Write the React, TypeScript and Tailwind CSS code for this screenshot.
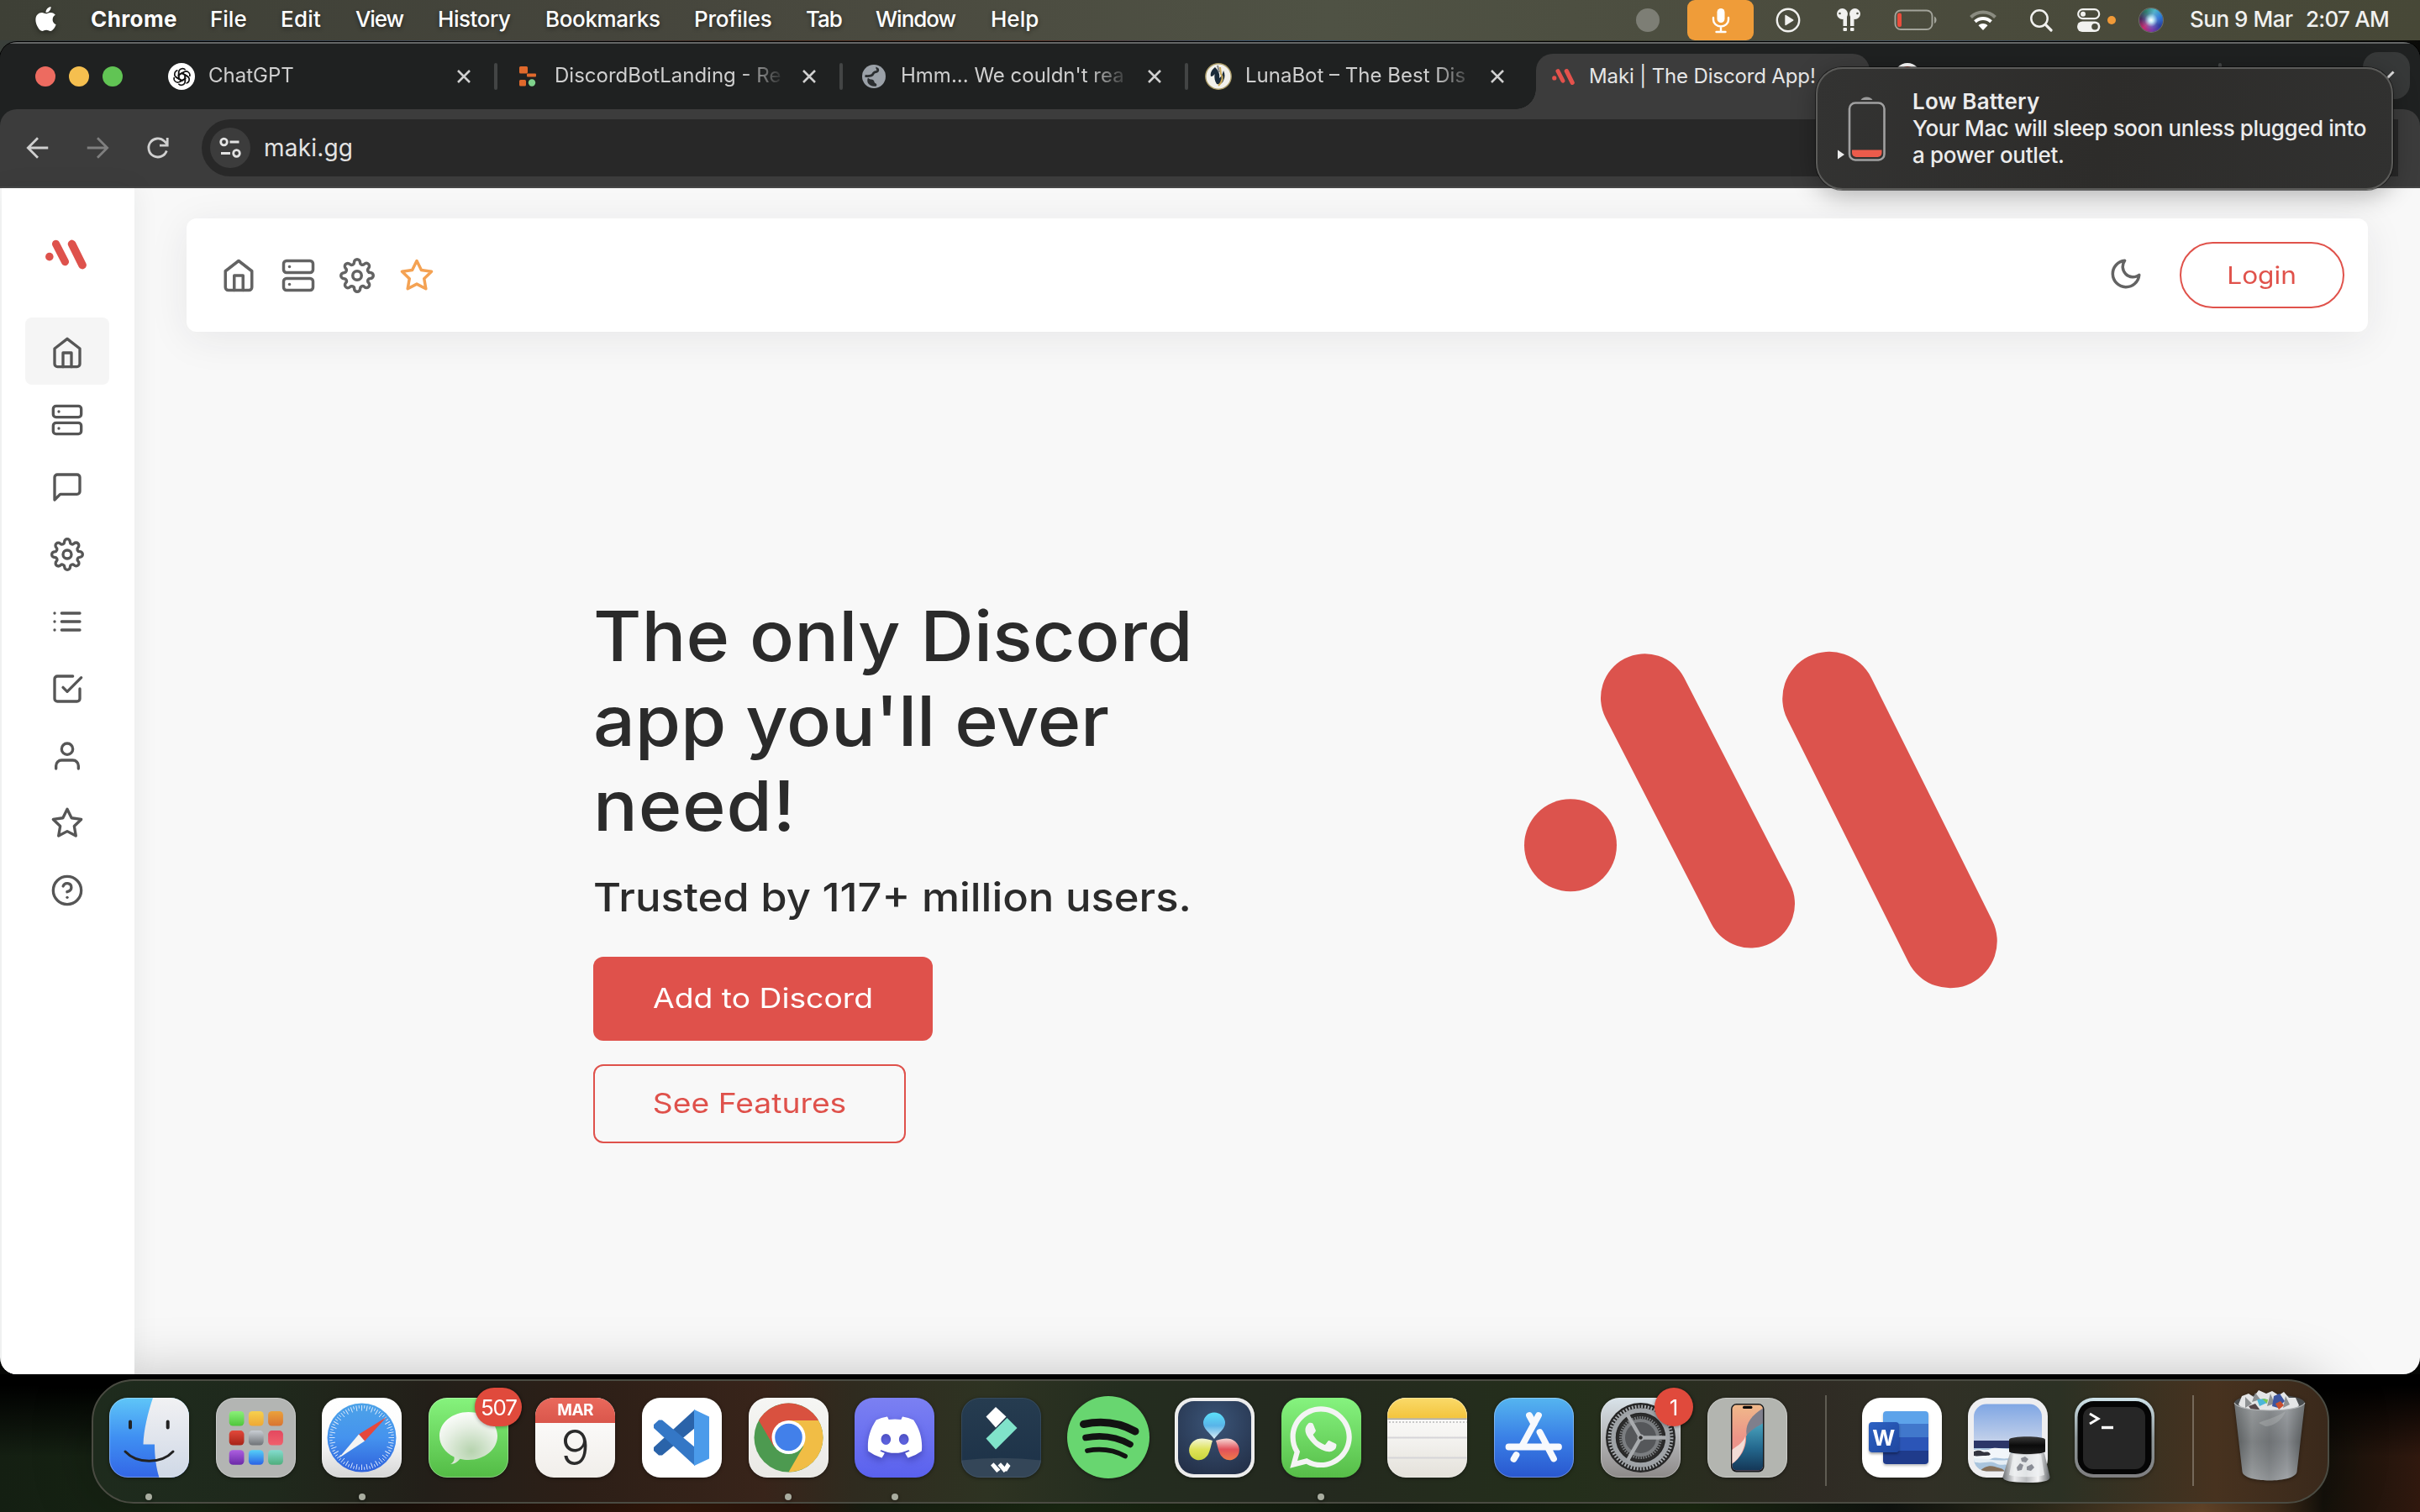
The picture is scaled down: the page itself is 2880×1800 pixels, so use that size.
import type { ReactNode } from "react";
import {
  FiCheckSquare,
  FiHelpCircle,
  FiHome,
  FiList,
  FiMessageSquare,
  FiMoon,
  FiServer,
  FiSettings,
  FiStar,
  FiUser,
} from "react-icons/fi";
import { FaApple, FaDiscord, FaWhatsapp } from "react-icons/fa";

/* ---------- shared pieces ---------- */

function MakiLogo({ className }: { className: string }) {
  return (
    <svg viewBox="1813 775 565 402" className={className} fill="none" stroke="currentColor" strokeLinecap="round">
      <circle cx="1869" cy="1006.3" r="55" fill="currentColor" stroke="none" />
      <path d="M1957.5 830.8L2083.5 1076" strokeWidth="105" />
      <path d="M2177 831.5L2321 1120.5" strokeWidth="111.5" />
    </svg>
  );
}

/* ---------- menu bar ---------- */

const menuItems = [
  { label: "Chrome", cls: "w-[142px] font-bold tracking-[0.4px]" },
  { label: "File", cls: "w-[84px] font-medium" },
  { label: "Edit", cls: "w-[89px] font-medium tracking-[0.2px]" },
  { label: "View", cls: "w-[98px] font-medium tracking-[-1.1px]" },
  { label: "History", cls: "w-[128px] font-medium tracking-[-0.45px]" },
  { label: "Bookmarks", cls: "w-[177px] font-medium tracking-[-0.36px]" },
  { label: "Profiles", cls: "w-[133px] font-medium tracking-[-0.2px]" },
  { label: "Tab", cls: "w-[83px] font-medium tracking-[-1px]" },
  { label: "Window", cls: "w-[137px] font-medium tracking-[-1px]" },
  { label: "Help", cls: "w-[80px] font-medium" },
];

function BatteryIcon() {
  return (
    <svg viewBox="0 0 52 26" className="h-[26px] w-[52px]">
      <rect x="1.5" y="1.5" width="44" height="22.5" rx="6.5" fill="none" stroke="#a2a39a" strokeWidth="2" />
      <rect x="4" y="4.5" width="5" height="16.5" rx="2" fill="#eb4d3d" />
      <path d="M48 8.5c3.4 1.600 3.400 7 0 8.500z" fill="#a2a39a" />
    </svg>
  );
}

function AirPodsIcon() {
  return (
    <svg viewBox="0 0 30 30" className="h-[30px] w-[30px]" fill="#f1f1ef">
      <ellipse cx="7.500" cy="7.500" rx="6.500" ry="6.500" />
      <ellipse cx="22.500" cy="7.500" rx="6.500" ry="6.500" />
      <rect x="8.500" y="7" width="4.500" height="15" />
      <rect x="17" y="7" width="4.500" height="15" />
      <rect x="8.500" y="24" width="4.500" height="4" rx="1" />
      <rect x="17" y="24" width="4.500" height="4" rx="1" />
      <circle cx="4.500" cy="7" r="1.300" fill="#55564a" />
      <circle cx="25.500" cy="7" r="1.300" fill="#55564a" />
    </svg>
  );
}

function WifiIcon() {
  return (
    <svg viewBox="0 0 34 26" className="h-[26px] w-[34px]" fill="none" strokeWidth="4">
      <path d="M2.500 9.500C10.500 1.500 23.500 1.500 31.500 9.500" stroke="#8a8b80" />
      <path d="M7.500 14.800C13 9.800 21 9.800 26.500 14.800" stroke="#fff" />
      <path d="M11.500 19.200C14.500 16.200 19.500 16.200 22.500 19.200L17 25z" fill="#fff" stroke="none" />
    </svg>
  );
}

function ControlCenterIcon() {
  return (
    <svg viewBox="0 0 28 28" className="h-[28px] w-[28px]">
      <rect x="1.200" y="1.200" width="25" height="11" rx="5.500" fill="none" stroke="#f1f1ef" strokeWidth="2.200" />
      <circle cx="7" cy="6.700" r="3" fill="#f1f1ef" />
      <rect x="0" y="15.500" width="27.400" height="12.500" rx="6.200" fill="#f1f1ef" />
      <circle cx="21" cy="21.700" r="3.800" fill="#4c4d3f" />
    </svg>
  );
}

function MenuBar() {
  return (
    <header className="relative flex h-[48px] w-full shrink-0 items-center bg-[linear-gradient(90deg,#3e4036_0%,#45453c_25%,#4b4b40_38%,#4f5244_55%,#4b4c3e_75%,#474837_100%)] text-[26px] text-white">
      <div className="flex w-[108px] justify-center pb-[3px]">
        <FaApple className="h-[33px] w-[33px] drop-shadow-[0_2px_3px_rgba(0,0,0,0.4)]" />
      </div>
      <nav className="flex pb-[3px] [text-shadow:0_2px_5px_rgba(0,0,0,0.45)]">
        {menuItems.map((m) => (
          <span key={m.label} className={`whitespace-nowrap ${m.cls}`}>
            {m.label}
          </span>
        ))}
      </nav>
      <div className="ml-auto flex h-full items-center">
        <span className="h-[28px] w-[28px] rounded-full bg-[#7d7e75]" />
        <span className="ml-[33px] flex h-full w-[79px] items-center justify-center rounded-[9px] bg-[#ef9c39]">
          <svg viewBox="0 0 24 32" className="h-[32px] w-[24px]" fill="none" stroke="#fff" strokeWidth="2.400" strokeLinecap="round">
            <rect x="7.500" y="2" width="9" height="17" rx="4.500" fill="#fff" stroke="none" />
            <path d="M3 13v2.500a9 8 0 0 0 18 0V13M12 23.500V29M6.500 30h11" />
          </svg>
        </span>
        <svg viewBox="0 0 30 30" className="ml-[26px] h-[30px] w-[30px]">
          <circle cx="15" cy="15" r="13.200" fill="none" stroke="#f1f1ef" strokeWidth="2.400" />
          <path d="M11.300 9.600v10.800c0 .8.700 1 1.300.6l8.400-5.200c.6-.4.600-1.200 0-1.600L12.600 9c-.6-.4-1.300-.2-1.300.6z" fill="#f1f1ef" />
        </svg>
        <span className="ml-[42px]">
          <AirPodsIcon />
        </span>
        <span className="ml-[39px]">
          <BatteryIcon />
        </span>
        <span className="ml-[37px]">
          <WifiIcon />
        </span>
        <svg viewBox="0 0 28 28" className="ml-[38px] h-[28px] w-[28px]" fill="none" stroke="#f1f1ef" strokeLinecap="round">
          <circle cx="12" cy="12" r="9.700" strokeWidth="2.500" />
          <path d="M19.200 19.200L26 26" strokeWidth="3.200" />
        </svg>
        <span className="ml-[29px]">
          <ControlCenterIcon />
        </span>
        <span className="ml-[8px] h-[10px] w-[10px] rounded-full bg-[#f19a38]" />
        <span className="ml-[28px] h-[28px] w-[28px] rounded-full bg-[radial-gradient(circle_at_50%_50%,#ffffff_0%,#bfe6f5_14%,rgba(120,150,220,0.3)_40%,transparent_60%),conic-gradient(from_20deg,#4fb6c9,#2a78d8,#2b3fa0,#7a3aa8,#c52d6f,#4a2a5c,#2f7c6a,#4fb6c9)] ring-1 ring-[#6e706b]" />
        <div className="ml-[32px] flex pb-[3px] font-medium text-[#f1f1ef]">
          <span className="w-[138px] whitespace-nowrap tracking-[-0.48px]">Sun 9 Mar</span>
          <span className="w-[136px] whitespace-nowrap tracking-[-0.73px]">2:07 AM</span>
        </div>
      </div>
    </header>
  );
}

/* ---------- browser chrome ---------- */

function CloseX() {
  return (
    <svg viewBox="0 0 16 16" className="h-[16px] w-[16px] shrink-0" stroke="#d0d0d0" strokeWidth="2.600">
      <path d="M1 1l14 14M15 1L1 15" />
    </svg>
  );
}

function ChatGptIcon() {
  return (
    <span className="flex h-[32px] w-[32px] items-center justify-center rounded-full bg-white">
      <svg viewBox="0 0 24 24" className="h-[25px] w-[25px]" fill="none" stroke="#111" strokeWidth="1.500" strokeLinejoin="round">
        {[0, 60, 120, 180, 240, 300].map((a) => (
          <path key={a} d="M8.300 15.200V7a4.400 4.400 0 0 1 7.700-2.900M8.300 9.900l3.700-2.150 6.600 3.800" transform={`rotate(${a} 12 12)`} />
        ))}
      </svg>
    </span>
  );
}

function ReplitIcon() {
  return (
    <svg viewBox="0 0 32 32" className="h-[32px] w-[32px]">
      <rect x="6" y="4" width="10" height="8.500" rx="1.500" fill="#e0692c" />
      <rect x="15" y="12.500" width="11" height="4" rx="1" fill="#e0692c" />
      <rect x="6" y="20" width="8" height="7.500" rx="1.500" fill="#e0692c" />
      <circle cx="21" cy="23.500" r="4.200" fill="#7fd38c" />
    </svg>
  );
}

function GlobeIcon() {
  return (
    <svg viewBox="0 0 32 32" className="h-[32px] w-[32px]">
      <circle cx="16" cy="16" r="14" fill="#9ba1a8" />
      <path d="M5.500 15.500c2 .2 5 .3 7.500-.6 2.600-.9 1.500-2.700 3.500-3.700 1.800-.9 4.200-.4 4.300-2.700.1-1.600-1.800-2-1-3.300" fill="none" stroke="#2b2e30" strokeWidth="2.800" />
      <path d="M9 17.500c1.500 2.500 5 1.500 6.500 3s.5 3 2.500 3.700c1.500.5 1.500 1.800 1 3.300-4 1-8-.5-10-3.500-1-2-1-4.500 0-6.500z" fill="#2b2e30" />
    </svg>
  );
}

function LunaIcon() {
  return (
    <svg viewBox="0 0 32 32" className="h-[32px] w-[32px]">
      <circle cx="16" cy="16" r="15.200" fill="#f2f1ec" stroke="#a99a66" strokeWidth="1.400" />
      <path d="M12 5c-4 3-6 7-5 11 2 0 3.500-1 4.500-3-.5 5 0 8 2.500 12 4 1 7-1 8-4 2-4 2-8 0-12-1 4-2 7-5 9 1-5-1-9-5-13z" fill="#1b2b3a" />
      <path d="M18 5l1 8c3 4 2 9-3 14" fill="none" stroke="#c9a95a" strokeWidth="2" />
      <path d="M15 3l2 8" stroke="#888" strokeWidth="2" />
    </svg>
  );
}

const tabs: { title: string; icon: ReactNode; cls: string }[] = [
  { title: "ChatGPT", icon: <ChatGptIcon />, cls: "w-[412px] pl-[20px]" },
  { title: "DiscordBotLanding - Re", icon: <ReplitIcon />, cls: "w-[411px] pl-[20px]" },
  { title: "Hmm... We couldn't rea", icon: <GlobeIcon />, cls: "w-[411px] pl-[21px]" },
  { title: "LunaBot – The Best Dis", icon: <LunaIcon />, cls: "w-[408px] pl-[20px]" },
];

function TabStrip() {
  return (
    <div className="flex h-[78px] shrink-0 bg-[#1f2121] text-[24px] text-[#cfcfcf]">
      <div className="flex w-[180px] items-center gap-[16px] pl-[42px]">
        <span className="h-[24px] w-[24px] rounded-full bg-[#ed6b60]" />
        <span className="h-[24px] w-[24px] rounded-full bg-[#f5bf4f]" />
        <span className="h-[24px] w-[24px] rounded-full bg-[#61c454]" />
      </div>
      {tabs.map((t, i) => (
        <div key={t.title} className={`flex items-center ${t.cls}`}>
          {t.icon}
          <span className="mb-[2px] ml-[16px] w-[274px] whitespace-nowrap [mask-image:linear-gradient(90deg,#000_82%,transparent_100%)]">
            {t.title}
          </span>
          <span className="ml-auto flex items-center">
            <CloseX />
            <span className={`ml-[28px] h-[32px] w-[4px] rounded-full ${i < 3 ? "bg-[#434545]" : ""}`} />
          </span>
        </div>
      ))}
      <div className="flex items-end">
        <span className="h-[24px] w-[6px]" />
        <div className="relative mt-[12px] flex h-[66px] w-[397px] items-center self-end rounded-t-[20px] bg-[#3c3c3c] pb-[12px] pl-[19px] text-[#e6e6e6]">
          <span className="absolute bottom-0 left-[-24px] h-[24px] w-[24px] bg-[radial-gradient(circle_at_0_0,transparent_23.500px,#3c3c3c_24px)]" />
          <span className="absolute right-[-24px] bottom-0 h-[24px] w-[24px] bg-[radial-gradient(circle_at_100%_0,transparent_23.500px,#3c3c3c_24px)]" />
          <MakiLogo className="h-[19px] w-[27px] text-[#e4524c]" />
          <span className="ml-[17px] whitespace-nowrap tracking-[-0.14px]">Maki | The Discord App!</span>
        </div>
      </div>
      <div className="ml-[29px] flex items-center">
        <span className="flex h-[32px] w-[32px] items-center justify-center rounded-full bg-white">
          <span className="h-[24px] w-[20px] rounded-full bg-[#c8452f]" />
        </span>
        <span className="ml-[354px] h-[32px] w-[4px] rounded-full bg-[#434545]" />
      </div>
      <div className="mt-[10px] mr-[12px] ml-auto flex h-[56px] w-[56px] items-center justify-center rounded-[18px] bg-[#373939]">
        <svg viewBox="0 0 20 12" className="h-[12px] w-[20px]" fill="none" stroke="#e0e0e0" strokeWidth="3">
          <path d="M1.500 1.500L10 10l8.500-8.500" />
        </svg>
      </div>
    </div>
  );
}

function Toolbar() {
  return (
    <div className="flex h-[94px] shrink-0 items-center rounded-tl-[20px] rounded-tr-[20px] border-b-2 border-[#464646] bg-[#3c3c3c]">
      <svg viewBox="0 0 24 24" className="ml-[31px] h-[28px] w-[28px]" fill="none" stroke="#d0d0d0" strokeWidth="2.400">
        <path d="M22.500 12H2.500M12 2L2 12l10 10" />
      </svg>
      <svg viewBox="0 0 24 24" className="ml-[43px] h-[28px] w-[28px]" fill="none" stroke="#7f7f7f" strokeWidth="2.400">
        <path d="M1.500 12h20M12 2l10 10-10 10" />
      </svg>
      <svg viewBox="0 0 28 28" className="ml-[44px] h-[28px] w-[28px]" fill="none" stroke="#d0d0d0" strokeWidth="2.800">
        <path d="M24.300 17.500A11 11 0 1 1 21.500 6l3.500 3.500M25.200 2v9.200H16" />
      </svg>
      <div className="ml-[38px] flex h-[68px] flex-1 items-center rounded-l-[34px] bg-[#282828]">
        <span className="ml-[10px] flex h-[48px] w-[48px] items-center justify-center rounded-full bg-[#3c3c3c]">
          <svg viewBox="0 0 26 26" className="h-[26px] w-[26px]" fill="none" stroke="#e3e3e3" strokeWidth="2.800">
            <circle cx="5.500" cy="6" r="3.800" />
            <path d="M12.500 6h11M2 19.500h11" />
            <circle cx="20.500" cy="19.500" r="3.800" />
          </svg>
        </span>
        <span className="ml-[16px] pb-[1px] text-[28px] tracking-[0.2px] text-[#e3e3e3]">maki.gg</span>
      </div>
      <span className="w-[26px]" />
    </div>
  );
}

/* ---------- page ---------- */

const sideIcons = [FiHome, FiServer, FiMessageSquare, FiSettings, FiList, FiCheckSquare, FiUser, FiStar, FiHelpCircle];

function Sidebar() {
  return (
    <aside className="z-10 flex w-[158px] shrink-0 flex-col items-center bg-white pr-[2px] shadow-[0_0_30px_rgba(34,41,47,0.07)]">
      <MakiLogo className="mt-[61px] mr-[4px] h-[36px] w-[49px] text-[#de524c]" />
      <nav className="mt-[57px] flex flex-col">
        {sideIcons.map((Icon, i) => (
          <a
            key={i}
            className={`flex h-[80px] w-[100px] items-center justify-center rounded-[8px] pt-[4px] ${i === 0 ? "bg-[#f5f5f5]" : ""}`}
          >
            <Icon className="h-[40px] w-[40px] text-[#565656]" />
          </a>
        ))}
      </nav>
    </aside>
  );
}

function TopNav() {
  return (
    <div className="mt-[36px] mr-[62px] ml-[62px] flex h-[135px] shrink-0 items-center rounded-[12px] bg-white text-[#636363] shadow-[0_8px_48px_rgba(34,41,47,0.08)]">
      <div className="ml-[41px] flex gap-[28.500px]">
        <FiHome className="h-[42px] w-[42px]" />
        <FiServer className="h-[42px] w-[42px]" />
        <FiSettings className="h-[42px] w-[42px]" />
        <FiStar className="h-[42px] w-[42px] text-[#f4a253]" />
      </div>
      <FiMoon className="mb-[3px] ml-auto h-[42px] w-[42px]" />
      <button className="mr-[28px] ml-[43px] flex h-[79px] w-[196px] items-center justify-center rounded-full border-2 border-[#e0524b] text-[28px] text-[#e0524b]">
        <span className="scale-x-[1.130]">Login</span>
      </button>
    </div>
  );
}

function Hero() {
  return (
    <section className="flex pt-[312px] pl-[546px] text-[#2b2b2b]">
      <div className="flex w-[1107px] shrink-0 flex-col items-start">
        <h1 className="w-[690px] origin-left scale-x-[1.060] text-[83px] leading-[101px] font-medium">
          <span className="tracking-[0.100px]">The only Discord</span>
          <br />
          <span className="tracking-[-0.200px]">app you'll ever</span>
          <br />
          <span className="tracking-[0.700px]">need!</span>
        </h1>
        <p className="mt-[30px] origin-left scale-x-[1.080] text-[47px] leading-[56px] font-medium whitespace-nowrap">
          Trusted by 117+ million users.
        </p>
        <button className="mt-[43px] flex h-[100px] w-[404px] items-center justify-center rounded-[12px] bg-[#df514b] text-[33px] text-white">
          <span className="scale-x-[1.130]">Add to Discord</span>
        </button>
        <button className="mt-[28px] flex h-[94px] w-[372px] items-center justify-center rounded-[12px] border-2 border-[#df514b] text-[33px] text-[#df514b]">
          <span className="scale-x-[1.130]">See Features</span>
        </button>
      </div>
      <MakiLogo className="mt-[67.500px] h-[402px] w-[565px] text-[#dc534d]" />
    </section>
  );
}

function BrowserWindow() {
  return (
    <div className="relative mt-[2px] flex h-[1586px] shrink-0 flex-col overflow-hidden rounded-[20px] bg-[#1f2121] shadow-[0_0_0_1px_#000]">
      <div className="h-[2px] shrink-0 bg-[#646666]" />
      <TabStrip />
      <Toolbar />
      <div className="flex min-h-0 flex-1 bg-[#f8f8f8] pl-[2px]">
        <Sidebar />
        <main className="flex min-w-0 flex-1 flex-col">
          <TopNav />
          <Hero />
        </main>
      </div>
    </div>
  );
}

/* ---------- notification ---------- */

function Notification() {
  return (
    <div className="absolute top-[80px] left-[2161px] flex h-[146px] w-[687px] rounded-[32px] border-2 border-[#5b5b59] bg-[linear-gradient(100deg,#333332_0%,#2d2c2a_50%,#313130_100%)] text-[26px] leading-[32px] text-[#ececec] shadow-[0_6px_30px_rgba(0,0,0,0.3),0_0_0_1px_rgba(0,0,0,0.5)]">
      <svg viewBox="0 0 58 80" className="mt-[31px] ml-[23px] h-[80px] w-[58px]">
        <path d="M1 65.500v11l8-5.500z" fill="#ececec" />
        <path d="M28.500 6a7.500 5.500 0 0 1 14 0z" fill="#9b9b9b" />
        <rect x="15" y="9.500" width="41.500" height="68" rx="7" fill="none" stroke="#a0a0a0" strokeWidth="2.600" />
        <path d="M18 65.500h35.500V69a5 5 0 0 1-5 5H23a5 5 0 0 1-5-5z" fill="#ec5b4b" />
      </svg>
      <div className="mt-[22.500px] ml-[32px] font-medium whitespace-nowrap">
        <p className="font-semibold tracking-[0.200px]">Low Battery</p>
        <p className="tracking-[-0.410px]">Your Mac will sleep soon unless plugged into</p>
        <p className="tracking-[-0.310px]">a power outlet.</p>
      </div>
    </div>
  );
}

/* ---------- dock icons, each drawn on a 95 unit tile ---------- */

function Tile({ id, fill, children, rim }: { id: string; fill: string; children?: ReactNode; rim?: string }) {
  return (
    <svg viewBox="0 0 95 95" className="h-[95px] w-[95px]">
      <defs>
        <clipPath id={`clip-${id}`}>
          <rect width="95" height="95" rx="22" />
        </clipPath>
      </defs>
      <g clipPath={`url(#clip-${id})`}>
        <rect width="95" height="95" fill={fill} />
        {children}
      </g>
      <rect x=".5" y=".5" width="94" height="94" rx="21.500" fill="none" stroke={rim ?? "rgba(255,255,255,0.3)"} />
    </svg>
  );
}

function Grad({ id, stops, x2 = 0, y2 = 1 }: { id: string; stops: string[]; x2?: number; y2?: number }) {
  return (
    <linearGradient id={id} x1="0" y1="0" x2={x2} y2={y2}>
      {stops.map((s, i) => (
        <stop key={i} offset={i / (stops.length - 1)} stopColor={s} />
      ))}
    </linearGradient>
  );
}

function Finder() {
  return (
    <Tile id="finder" fill="url(#g-finder)">
      <defs>
        <Grad id="g-finder" stops={["#5fc6f8", "#3f8ff2", "#3366e6"]} />
        <Grad id="g-finder2" stops={["#f1f1f3", "#cfd8e6"]} />
      </defs>
      <path d="M52 0C46 18 41 38 40.500 55.500H54C54 70 56 84 59.500 95H95V0z" fill="url(#g-finder2)" />
      <path d="M25 28.500v7M69.700 28.500v7" stroke="#222" strokeWidth="4" strokeLinecap="round" />
      <path d="M19 64C33 79 62 79 76 64" fill="none" stroke="#222" strokeWidth="3" strokeLinecap="round" />
    </Tile>
  );
}

const padColors = [
  ["#8af078", "#4fc63c"], ["#f6d04e", "#eea834"], ["#eba13a", "#d87432"],
  ["#e2483a", "#a62418"], ["#c8cdd3", "#6f7377"], ["#e4485f", "#f0606c"],
  ["#ad5fe0", "#6b2aa8"], ["#55d0f8", "#2a62e6"], ["#83dccf", "#4fae7c"],
];

function Launchpad() {
  return (
    <Tile id="pad" fill="#b3b5b3">
      <defs>
        {padColors.map((c, i) => (
          <Grad key={i} id={`g-pad${i}`} stops={c} />
        ))}
      </defs>
      {padColors.map((_, i) => (
        <rect key={i} x={15.700 + (i % 3) * 23.200} y={16 + Math.floor(i / 3) * 23.100} width="17.800" height="17.500" rx="4.500" fill={`url(#g-pad${i})`} />
      ))}
    </Tile>
  );
}

function Safari() {
  return (
    <Tile id="safari" fill="url(#g-saf)">
      <defs>
        <Grad id="g-saf" stops={["#ffffff", "#fbfbfb", "#d6d6d6"]} />
        <Grad id="g-saf2" stops={["#4da3e8", "#4593ee", "#2f62dc"]} />
      </defs>
      <circle cx="47.500" cy="47.500" r="41" fill="url(#g-saf2)" />
      {Array.from({ length: 72 }, (_, i) => (
        <path key={i} d={i % 2 ? "M47.500 9v3.500" : "M47.500 9v6.500"} stroke="#dfeafb" strokeWidth=".9" transform={`rotate(${i * 5} 47.500 47.500)`} />
      ))}
      <path d="M77 23L51 51.500L44 43.500z" fill="#e5483c" />
      <path d="M20 72L44 43.500L51 51.500z" fill="#f4f4f4" />
    </Tile>
  );
}

function Messages() {
  return (
    <Tile id="msg" fill="url(#g-msg)">
      <defs>
        <Grad id="g-msg" stops={["#86f37d", "#53bb45"]} />
        <radialGradient id="g-msg2" cx=".55" cy=".75" r=".8">
          <stop offset="0" stopColor="#b6d3ae" />
          <stop offset=".6" stopColor="#e6efe3" />
          <stop offset="1" stopColor="#fff" />
        </radialGradient>
      </defs>
      <path d="M26 79c4-2 5-5 4.500-8.500C20 65.500 13 56 13 45.500 13 29.500 28.500 17 47.500 17S82 29.500 82 45.500 66.500 74 47.500 74c-3.500 0-7-.4-10-1.200C34.500 76.500 31 79 26 79z" fill="url(#g-msg2)" />
    </Tile>
  );
}

function CalendarIcon() {
  return (
    <div className="flex h-[95px] w-[95px] flex-col items-center overflow-hidden rounded-[22px] bg-[linear-gradient(#ffffff,#f1eeea)]">
      <div className="flex h-[30px] w-full shrink-0 items-center justify-center bg-[linear-gradient(#ea695c,#d9564b)] pt-[2px] text-[19px] font-bold tracking-[-0.600px] text-white">
        MAR
      </div>
      <div className="text-[58px] leading-[59px] font-light text-[#2b2b2b]">9</div>
    </div>
  );
}

function VsCode() {
  return (
    <Tile id="vsc" fill="#fff">
      <path d="M63 14L14 59v4l6 5.500h4L63 36z" fill="#2a63a9" />
      <path d="M63 81L14 36v-4l6-5.500h4L63 59z" fill="#3477c6" />
      <path d="M62 14l18 8.500v50L62 81z" fill="#4b9bea" />
    </Tile>
  );
}

function ChromeIcon() {
  return (
    <Tile id="chr" fill="url(#g-chr)">
      <defs>
        <Grad id="g-chr" stops={["#f6f6f4", "#e9e8e4"]} />
      </defs>
      <circle cx="47.500" cy="47.500" r="41" fill="#4d9a50" />
      <path d="M83 27A41 41 0 0 1 47.500 88.500L65.250 57.750L47.500 47.500V27z" fill="#f1bd45" />
      <path d="M83 27A41 41 0 0 0 12 27L29.750 57.750L47.500 47.500V27z" fill="#d9513f" />
      <circle cx="47.500" cy="47" r="20" fill="#fff" />
      <circle cx="47.500" cy="47" r="16.300" fill="#4280ea" />
    </Tile>
  );
}

function DiscordIcon() {
  return (
    <div className="flex h-[95px] w-[95px] items-center justify-center rounded-[22px] bg-[linear-gradient(#7b80f2,#5a61ee)]">
      <FaDiscord className="h-[66px] w-[70px] text-white drop-shadow-[0_4px_4px_rgba(40,40,140,0.5)]" />
    </div>
  );
}

function Filmora() {
  return (
    <Tile id="flm" fill="url(#g-flm)" rim="rgba(255,255,255,0.08)">
      <defs>
        <Grad id="g-flm" stops={["#263c50", "#1c3147"]} />
      </defs>
      <path d="M0 74.500Q47 69 95 74.500V95H0z" fill="#344658" />
      <path d="M41 11L53.500 22.500L41 35.500L29.500 22.500z" fill="#fff" />
      <path d="M54.500 24L66.500 36L41 61.500L29.500 48.500z" fill="#80e3ca" />
      <path d="M35 80.500l3.500-3.200 8 8.500-4.300 3.200zM43.500 80.500l3.500-3.200 8 8.500-4.300 3.200zM54.500 77l4 4-4.500 7-3.500-4z" fill="#fff" />
    </Tile>
  );
}

function Spotify() {
  return (
    <svg viewBox="0 0 98 98" className="h-[98px] w-[98px]">
      <circle cx="49" cy="49" r="49" fill="#68d670" />
      <g fill="none" stroke="#121312" strokeLinecap="round">
        <path d="M19.500 33.500Q53 26.500 81 42" strokeWidth="9" />
        <path d="M22 49.500Q51 44 75 57.500" strokeWidth="7.600" />
        <path d="M24 65Q49 60.500 69 71.500" strokeWidth="5.800" />
      </g>
    </svg>
  );
}

function DaVinci() {
  return (
    <Tile id="dv" fill="#ececec">
      <defs>
        <radialGradient id="g-dv" cx=".5" cy=".3" r=".8">
          <stop offset="0" stopColor="#3b5578" />
          <stop offset="1" stopColor="#232f47" />
        </radialGradient>
        <Grad id="g-dv1" stops={["#5ce0fa", "#58b4e8", "#dcedf4"]} />
        <Grad id="g-dv2" stops={["#f3f6d8", "#dfe35a", "#c9d43c"]} />
        <Grad id="g-dv3" stops={["#f6d9d6", "#e2515a", "#ee7b4a"]} />
      </defs>
      <rect x="4" y="4" width="87" height="87" rx="19" fill="url(#g-dv)" />
      <path d="M47 49C41 41 34 37 34 30a13 12.500 0 0 1 26 0c0 7-7 11-13 19z" fill="url(#g-dv1)" />
      <path d="M45 51C36 48 28 47 22 52c-7 6-6 16 0 20 7 5 15 1 18-5 2.500-5 3-10 5-16z" fill="url(#g-dv2)" />
      <path d="M49 51c9-3 17-4 23 1 7 6 6 16 0 20-7 5-15 1-18-5-2.500-5-3-10-5-16z" fill="url(#g-dv3)" />
    </Tile>
  );
}

function WhatsApp() {
  return (
    <div className="flex h-[95px] w-[95px] items-center justify-center rounded-[22px] bg-[linear-gradient(#86f37f,#56bd48)]">
      <FaWhatsapp className="h-[84px] w-[84px] text-[#f4f4f4]" />
    </div>
  );
}

function Notes() {
  return (
    <Tile id="nts" fill="url(#g-nts)">
      <defs>
        <Grad id="g-nts" stops={["#ffffff", "#f4f3f0", "#e4e1da"]} />
        <Grad id="g-nts2" stops={["#fada6a", "#f3c43c"]} />
      </defs>
      <rect width="95" height="24.500" fill="url(#g-nts2)" />
      <path d="M0 25.200H95" stroke="#a5a196" strokeWidth="1.600" />
      <path d="M2 29H95" stroke="#c9c9c9" strokeWidth="2" strokeDasharray="2 2" />
      <path d="M0 47.500H95M0 71.500H95" stroke="#d6d5d8" strokeWidth="1.800" />
    </Tile>
  );
}

function AppStore() {
  return (
    <Tile id="aps" fill="url(#g-aps)">
      <defs>
        <Grad id="g-aps" stops={["#55b5f0", "#3a80e6", "#2957cf"]} />
      </defs>
      <g stroke="#f7f9fd" strokeWidth="7.800" strokeLinecap="round">
        <path d="M42 21L47.500 31M54.500 41L71 72.500M17.500 58.500H77M26.500 68L23.500 73" />
        <path d="M53 21L34 56" />
      </g>
    </Tile>
  );
}

function SystemSettings() {
  return (
    <Tile id="set" fill="url(#g-set)">
      <defs>
        <Grad id="g-set" stops={["#d9e3ea", "#b5b6b8", "#8d8a89"]} />
      </defs>
      <circle cx="47.500" cy="47.500" r="41.500" fill="#262626" />
      <g fill="none">
        <circle cx="47.500" cy="47.500" r="37" stroke="#a8acb0" strokeWidth="4" strokeDasharray="1.900 1.900" />
        <circle cx="47.500" cy="47.500" r="32.500" stroke="#9fa3a7" strokeWidth="5.500" />
        <circle cx="47.500" cy="47.500" r="25" fill="#3a3a3a" stroke="#2b2b2b" strokeWidth="7" />
        <circle cx="47.500" cy="47.500" r="24" stroke="#7d8083" strokeWidth="3" strokeDasharray="1.500 1.500" />
        <circle cx="47.500" cy="47.500" r="20.500" fill="#55575a" stroke="#7b7e81" strokeWidth="4" />
        <g stroke="#a8abae" strokeWidth="4.500">
          <path d="M47.500 47.500H78" />
          <path d="M47.500 47.500L32 20.500M47.500 47.500L32 74.500" />
        </g>
      </g>
      <circle cx="47.500" cy="47.500" r="4" fill="#a8abae" />
      <circle cx="47.500" cy="47.500" r="2.200" fill="#2b2b2b" />
    </Tile>
  );
}

function IPhone() {
  return (
    <Tile id="iph" fill="#b3b5b0">
      <defs>
        <Grad id="g-iph" stops={["#f0b98a", "#ec9488", "#eb8f92"]} />
        <Grad id="g-iph2" stops={["#4aa3bd", "#24688e", "#12304f"]} />
        <clipPath id="clip-screen">
          <rect x="29.500" y="8.500" width="36.500" height="78" rx="5" />
        </clipPath>
      </defs>
      <rect x="28" y="7" width="39.500" height="81.500" rx="6.500" fill="#17191c" />
      <g clipPath="url(#clip-screen)">
        <rect x="29" y="8" width="38" height="79" fill="url(#g-iph)" />
        <path d="M67 12C50 22 44 34 47 46L67 32z" fill="#7f7f8c" />
        <path d="M45 46C46 56 40 72 29 79V62C38 56 43 52 45 46z" fill="#f3dcd6" />
        <path d="M67 30C55 36 48 42 46 46C47 58 40 72 29 79V90H67z" fill="url(#g-iph2)" />
      </g>
      <rect x="42" y="9.800" width="11.500" height="3.200" rx="1.600" fill="#0a0a0a" />
    </Tile>
  );
}

function Word() {
  return (
    <div className="flex h-[95px] w-[95px] items-center rounded-[22px] bg-white">
      <div className="z-10 ml-[8px] flex h-[36px] w-[36px] items-center justify-center rounded-[4px] bg-[linear-gradient(135deg,#2d62c4,#1f479f)] text-[26px] font-bold text-white shadow-[0_2px_3px_rgba(0,0,0,0.35)]">
        W
      </div>
      <div className="-ml-[19px] flex h-[63px] w-[54px] flex-col overflow-hidden rounded-[4px] shadow-[0_2px_3px_rgba(0,0,0,0.25)]">
        <span className="flex-1 bg-[#5da3ea]" />
        <span className="flex-1 bg-[#4178cc]" />
        <span className="flex-1 bg-[#2b55b7]" />
        <span className="flex-1 bg-[#1f3b8b]" />
      </div>
    </div>
  );
}

function Preview() {
  return (
    <svg viewBox="0 0 98 101" className="-mr-[3px] mt-[6px] h-[101px] w-[98px]">
      <defs>
        <Grad id="g-sky" stops={["#7fa6e4", "#c3d1ea"]} />
        <Grad id="g-jar" x2={1} y2={0} stops={["#6e7275", "#e9eaec", "#b9bbbe", "#f4f4f5", "#63676a"]} />
        <Grad id="g-lid" stops={["#3a3a3a", "#0b0b0b", "#1d1d1d"]} />
        <clipPath id="clip-photo">
          <rect x="7" y="7.500" width="81" height="80" rx="15" />
        </clipPath>
      </defs>
      <rect width="95" height="95" rx="22" fill="#eeeef0" />
      <g clipPath="url(#clip-photo)">
        <rect x="7" y="7" width="82" height="45" fill="url(#g-sky)" />
        <rect x="7" y="51" width="82" height="12" fill="#2c3668" />
        <rect x="7" y="60" width="82" height="29" fill="#a9c4dd" />
        <path d="M7 62c8-2 14 2 20-1s16 1 24 0v10c-10 4-16-2-24 2s-14-2-20 1z" fill="#f2f6fa" />
        <path d="M7 64c4-1 7-2 10 0s6-1 9 2-4 3-8 3-8 1-11 0z" fill="#33343f" />
        <path d="M14 88c4-6 12-8 18-6s10 2 12 6z" fill="#85705a" />
        <path d="M7 76c8 4 18-2 26 2s10 0 14 2v-6c-12 2-26-2-40-2z" fill="#e6eef5" />
      </g>
      <path d="M50 66h41l6.500 28c1 5-8 7-27 7s-30-2-29-7z" fill="url(#g-jar)" />
      <path d="M54 68h33l4 24c-10 3-32 3-42 0z" fill="#eef0f2" opacity=".75" />
      <path d="M63 72l5-2 4 3-3 4-5-1zM58 83l4-5 4 2-2 6-5 1zM70 82l6-3 3 4-4 4-5-1z" fill="#8a8d95" />
      <path d="M49 50c0-5 43-5 43 0v14c0 4-43 4-43 0z" fill="url(#g-lid)" />
    </svg>
  );
}

function Terminal() {
  return (
    <svg viewBox="0 0 95 95" className="h-[95px] w-[95px]">
      <defs>
        <Grad id="g-term" stops={["#cfe3ea", "#8d9698", "#7e7e80"]} />
      </defs>
      <rect width="95" height="95" rx="22" fill="url(#g-term)" />
      <rect x="3.500" y="4" width="88" height="87" rx="19" fill="#050505" />
      <rect x="10" y="11" width="74" height="74" rx="12" fill="#262626" />
      <path d="M18 19l10 6-10 6" fill="none" stroke="#fff" strokeWidth="3" />
      <path d="M32 35.500h14" stroke="#fff" strokeWidth="3.400" />
    </svg>
  );
}

function Trash() {
  return (
    <svg viewBox="0 0 86 110" className="mb-[4px] h-[110px] w-[86px]">
      <defs>
        <Grad id="g-tr" x2={1} y2={0} stops={["#5f6365", "#8d9193", "#7b7f82", "#92969a", "#5d6163"]} />
        <Grad id="g-tr2" stops={["rgba(255,255,255,0.12)", "rgba(0,0,0,0.1)", "rgba(255,255,255,0.14)"]} />
      </defs>
      <ellipse cx="43" cy="16" rx="42" ry="10" fill="#4a4d4f" />
      <path d="M6 18l4-10 8-3 6 4 6-8 9 4 7-3 8 5 6-4 6 7 8 0 4 9-6 8H14z" fill="#e4e5e6" />
      <path d="M14 9l8 8-8 5zM26 4l6 8-10 3zM44 5l5 12-9 3zM62 8l5 10-8 4z" fill="#8d9092" />
      <path d="M28 12l10-1 2 5-9 4z" fill="#4cb6d8" />
      <path d="M34 11l7 1-1 5z" fill="#7ec850" />
      <path d="M48 8l7-3 6 9-8 8-7-2z" fill="#3d55a0" />
      <path d="M50 17l6-3 4 5-6 5z" fill="#c8502f" />
      <path d="M18 20l8-3 6 8-8 3z" fill="#54464a" />
      <path d="M1 16C6 28 80 28 85 16L75.500 98C74 112 12 112 10.500 98z" fill="url(#g-tr)" />
      <path d="M1 16C6 28 80 28 85 16L75.500 98C74 112 12 112 10.500 98z" fill="url(#g-tr2)" />
      <path d="M1 16C6 28 80 28 85 16" fill="none" stroke="#b4b7b9" strokeWidth="1.200" />
      <path d="M30 40c8-4 20-6 32-14-4 12-16 18-24 18z" fill="#b9bcbe" opacity=".35" />
    </svg>
  );
}

/* ---------- dock ---------- */

function DockItem({ children, running, badge, badgeCls }: { children: ReactNode; running?: boolean; badge?: string; badgeCls?: string }) {
  return (
    <div className="relative flex h-full w-[126.800px] shrink-0 items-center justify-center pb-[10px] drop-shadow-[0_1px_2px_rgba(0,0,0,0.4)]">
      {children}
      {badge && (
        <span
          className={`absolute top-[8px] flex h-[46px] items-center justify-center rounded-full bg-[#e04a3c] text-[26px] text-white shadow-[0_1px_4px_rgba(0,0,0,0.35)] ${badgeCls}`}
        >
          {badge}
        </span>
      )}
      {running && <span className="absolute bottom-[2px] left-[59px] h-[8px] w-[8px] rounded-full bg-[#a9ada0]" />}
    </div>
  );
}

function Dock() {
  return (
    <div className="relative mt-[6px] ml-[109px] flex h-[148px] w-[2663px] shrink-0 items-center rounded-[50px] border-2 border-[#4a4b42] bg-[linear-gradient(90deg,#1e2b1d_0%,#1f291c_8%,#231f19_15%,#2d1f17_22%,#38241a_30%,#2f2b1f_34%,#2e3322_40%,#242d1f_46%,#24291f_54%,#242f1b_66%,#2f2b24_77%,#313026_82%,#2c3124_88%,#47321f_95%,#3a291b_100%)] pl-[3px] shadow-[0_0_70px_rgba(0,0,0,0.26)]">
      <DockItem running><Finder /></DockItem>
      <DockItem><Launchpad /></DockItem>
      <DockItem running><Safari /></DockItem>
      <DockItem badge="507" badgeCls="left-[71px] w-[56px] tracking-[-1.200px]"><Messages /></DockItem>
      <DockItem><CalendarIcon /></DockItem>
      <DockItem><VsCode /></DockItem>
      <DockItem running><ChromeIcon /></DockItem>
      <DockItem running><DiscordIcon /></DockItem>
      <DockItem><Filmora /></DockItem>
      <DockItem><Spotify /></DockItem>
      <DockItem><DaVinci /></DockItem>
      <DockItem running><WhatsApp /></DockItem>
      <DockItem><Notes /></DockItem>
      <DockItem><AppStore /></DockItem>
      <DockItem badge="1" badgeCls="left-[80px] w-[46px]"><SystemSettings /></DockItem>
      <DockItem><IPhone /></DockItem>
      <span className="mr-[26px] mb-[2px] ml-[29px] h-[108px] w-[2px] shrink-0 bg-[#5f5c52]" />
      <DockItem><Word /></DockItem>
      <DockItem><Preview /></DockItem>
      <DockItem><Terminal /></DockItem>
      <span className="mr-[26px] mb-[2px] ml-[29px] h-[108px] w-[2px] shrink-0 bg-[#75695a]" />
      <DockItem><Trash /></DockItem>
    </div>
  );
}

export default function App() {
  return (
    <div className="relative flex h-[1800px] w-[2880px] flex-col overflow-hidden bg-[#060705] font-['Inter',sans-serif]">
      <div className="absolute inset-x-0 top-[48px] h-[24px] bg-[linear-gradient(90deg,#3a3f3a,#2c3a4a_8%,#4a5058_20%,#3f2a20_30%,#5a3326_42%,#36506a_52%,#3a3a26_65%,#4a5a6a_80%,#14160f_97%,#0a0a08_100%)]" />
      <div className="absolute inset-x-0 bottom-0 h-[164px] bg-[linear-gradient(#000000_8%,transparent_60%),linear-gradient(90deg,#141f12_0%,#182614_8%,#1a100a_16%,#34180b_28%,#2b150b_33%,#182012_36%,#1b2a13_44%,#141b10_58%,#1c2a12_70%,#10140f_78%,#2e2c1c_84%,#6b4a2c_91%,#46301c_94%,#14110a_96%,#30180e_100%)]" />
      <MenuBar />
      <BrowserWindow />
      <Dock />
      <Notification />
    </div>
  );
}
